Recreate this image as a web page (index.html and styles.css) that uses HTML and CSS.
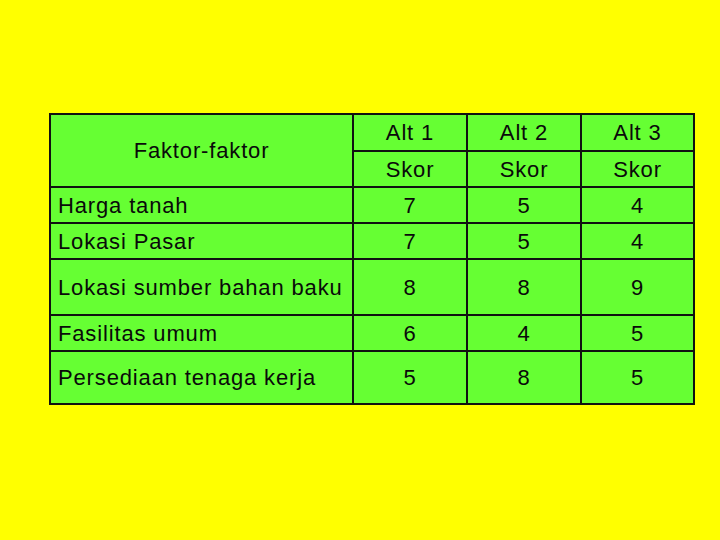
FILE: index.html
```html
<!DOCTYPE html>
<html>
<head>
<meta charset="utf-8">
<link rel="stylesheet" href="styles.css">
</head>
<body>
<div class="slide">
  <table class="grid">
    <tr class="r-alt">
      <td class="factor head" rowspan="2">Faktor-faktor</td>
      <td class="num">Alt 1</td>
      <td class="num">Alt 2</td>
      <td class="num last">Alt 3</td>
    </tr>
    <tr class="r-skor">
      <td class="num">Skor</td>
      <td class="num">Skor</td>
      <td class="num last">Skor</td>
    </tr>
    <tr class="r-std">
      <td class="factor">Harga tanah</td>
      <td class="num">7</td>
      <td class="num">5</td>
      <td class="num last">4</td>
    </tr>
    <tr class="r-std">
      <td class="factor">Lokasi Pasar</td>
      <td class="num">7</td>
      <td class="num">5</td>
      <td class="num last">4</td>
    </tr>
    <tr class="r-tall">
      <td class="factor">Lokasi sumber bahan baku</td>
      <td class="num">8</td>
      <td class="num">8</td>
      <td class="num last">9</td>
    </tr>
    <tr class="r-std">
      <td class="factor">Fasilitas umum</td>
      <td class="num">6</td>
      <td class="num">4</td>
      <td class="num last">5</td>
    </tr>
    <tr class="r-end">
      <td class="factor">Persediaan tenaga kerja</td>
      <td class="num">5</td>
      <td class="num">8</td>
      <td class="num last">5</td>
    </tr>
  </table>
</div>
</body>
</html>
```
FILE: styles.css
```css
html, body {
  margin: 0;
  padding: 0;
  background: #ffff00;
}
.slide {
  width: 720px;
  height: 540px;
  padding: 113px 0 0 49px;
  box-sizing: border-box;
}
.grid {
  border-collapse: separate;
  border-spacing: 0;
  border-top: 2px solid #111;
  border-left: 2px solid #111;
  background: #66ff33;
  font-family: "Liberation Sans", Arial, sans-serif;
  font-size: 22px;
  letter-spacing: 0.85px;
  color: #0a0a0a;
  table-layout: fixed;
  width: 646px;
}
.grid td {
  box-sizing: border-box;
  border-right: 2px solid #111;
  border-bottom: 2px solid #111;
  padding: 0;
  line-height: 25px;
  vertical-align: middle;
  white-space: nowrap;
}
.factor {
  width: 303px;
  text-align: left;
  padding-left: 7px !important;
}
.factor.head {
  text-align: center;
  padding-left: 0 !important;
}
.num {
  width: 114px;
  text-align: center;
}
.num.last {
  width: 113px;
}
.r-alt td { height: 37px; }
.r-skor td { height: 36px; }
.r-alt td.head { height: 73px; }
.r-std td { height: 36px; }
.r-tall td { height: 56px; }
.r-end td { height: 53px; }
```
